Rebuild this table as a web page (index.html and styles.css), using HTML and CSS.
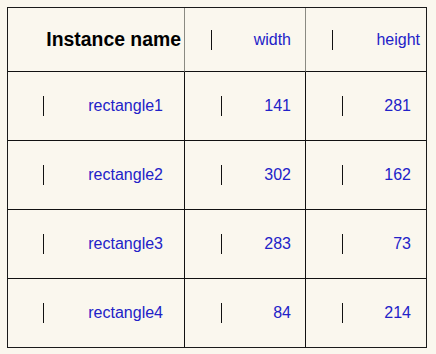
FILE: index.html
```html
<!DOCTYPE html>
<html>
<head>
<meta charset="utf-8">
<link rel="stylesheet" href="styles.css">
</head>
<body>
<div class="table">
  <div class="cell head c1"><span class="label title">Instance name</span></div>
  <div class="cell head c2"><span class="caret"></span><span class="label">width</span></div>
  <div class="cell head c3"><span class="caret"></span><span class="label">height</span></div>

  <div class="cell c1"><span class="caret"></span><span class="label">rectangle1</span></div>
  <div class="cell c2"><span class="caret"></span><span class="label">141</span></div>
  <div class="cell c3"><span class="caret"></span><span class="label">281</span></div>

  <div class="cell c1"><span class="caret"></span><span class="label">rectangle2</span></div>
  <div class="cell c2"><span class="caret"></span><span class="label">302</span></div>
  <div class="cell c3"><span class="caret"></span><span class="label">162</span></div>

  <div class="cell c1"><span class="caret"></span><span class="label">rectangle3</span></div>
  <div class="cell c2"><span class="caret"></span><span class="label">283</span></div>
  <div class="cell c3"><span class="caret"></span><span class="label">73</span></div>

  <div class="cell c1 last"><span class="caret"></span><span class="label">rectangle4</span></div>
  <div class="cell c2 last"><span class="caret"></span><span class="label">84</span></div>
  <div class="cell c3 last"><span class="caret"></span><span class="label">214</span></div>
</div>
</body>
</html>
```
FILE: styles.css
```css
html, body {
  margin: 0;
  padding: 0;
  background: #faf7ee;
}
body {
  padding: 7px;
  font-family: "Liberation Sans", Arial, sans-serif;
}
.table {
  display: grid;
  grid-template-columns: 177px 121px 120px;
  grid-template-rows: 64px 69px 69px 69px 68px;
  width: 420px;
  box-sizing: border-box;
  border: 1px solid #1a1a1a;
}
.cell {
  display: flex;
  align-items: center;
  box-sizing: border-box;
  border-bottom: 1px solid #111;
  min-width: 0;
}
.cell.last {
  border-bottom: none;
}
.c1, .c2 {
  border-right: 1px solid #111;
}
.head.c1, .head.c2 {
  border-right-color: #8a8a82;
}
.caret {
  flex: none;
  width: 1px;
  height: 20px;
  background: #111;
}
.label {
  margin-left: auto;
  font-size: 16px;
  color: #2222c8;
  white-space: nowrap;
}
.title {
  font-weight: bold;
  font-size: 19.4px;
  color: #000;
}
.c1 .caret { margin-left: 35px; }
.c1 { padding-right: 21px; }
.c2 .caret, .c3 .caret { margin-left: 36px; }
.c2 { padding-right: 14px; }
.c3 { padding-right: 15px; }
.head.c1 { padding-right: 3px; }
.head.c2 .caret, .head.c3 .caret { margin-left: 26px; }
.head.c3 { padding-right: 6px; }
```
